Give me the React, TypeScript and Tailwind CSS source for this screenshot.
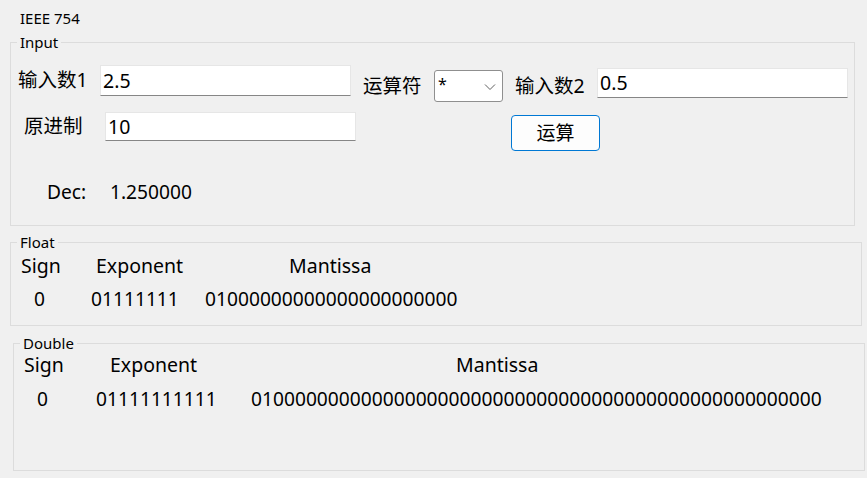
import React from 'react'

const font = { fontFamily: '"Noto Sans", "Noto Sans CJK SC", sans-serif' }

const TextBox: React.FC<{ value: string; className?: string }> = ({ value, className }) => (
  <div
    className={`bg-white border border-[#e6e6e6] border-b-[#868686] pl-[2px] flex items-center text-[19.5px] leading-[24px] text-black ${className ?? ''}`}
  >
    {value}
  </div>
)

const GroupBox: React.FC<{ title: string; className?: string; children: React.ReactNode }> = ({ title, className, children }) => (
  <fieldset className={`border border-[#dcdcdc] ${className ?? ''}`}>
    <legend className="ml-[6px] px-[3px] text-[15px] leading-[18px]">{title}</legend>
    {children}
  </fieldset>
)

export default function App() {
  return (
    <div className="w-[867px] h-[478px] bg-[#f0f0f0] overflow-hidden text-black" style={font}>
      <div className="pl-[20px] pt-[9px] text-[15px] leading-[18px] h-[33px]">IEEE 754</div>

      {/* Input */}
      <GroupBox title="Input" className="ml-[10px] w-[845px] h-[193px]">
        <div className="flex items-start h-[57px] text-[19.5px] leading-[24px]">
          <div className="ml-[7px] w-[82px] mt-[17px]">输入数1</div>
          <TextBox value="2.5" className="w-[251px] h-[31px] mt-[14px]" />
          <div className="ml-[12px] w-[71px] mt-[23px]">运算符</div>
          <div className="w-[69px] h-[32px] mt-[19px] bg-white border border-[#8f8f8f] rounded-[3px] flex items-center justify-between pl-[3px] pr-[6px]">
            <span className="text-[16px] leading-[20px] -mt-[4px]">*</span>
            <svg width="12" height="8" viewBox="0 0 12 8" className="mt-[2px]">
              <path d="M1 1.5 L6 6.5 L11 1.5" fill="none" stroke="#606060" strokeWidth="1" />
            </svg>
          </div>
          <div className="ml-[12px] w-[82px] mt-[23px]">输入数2</div>
          <TextBox value="0.5" className="w-[251px] h-[30px] mt-[17px]" />
        </div>
        <div className="flex items-start h-[44px] text-[19.5px] leading-[24px]">
          <div className="ml-[13px] w-[81px] mt-[6px]">原进制</div>
          <TextBox value="10" className="w-[251px] h-[29px] mt-[4px]" />
          <button className="ml-[155px] mt-[7px] w-[89px] h-[36px] bg-[#fdfdfd] border border-[#0078d4] rounded-[4px] text-[19px] leading-[24px]">
            运算
          </button>
        </div>
        <div className="flex mt-[28px] text-[19.2px] leading-[24px]">
          <div className="ml-[36px] w-[63px]">Dec:</div>
          <div>1.250000</div>
        </div>
      </GroupBox>

      {/* Float */}
      <GroupBox title="Float" className="ml-[10px] mt-[7px] w-[852px] h-[93px]">
        <div className="flex mt-[3px] text-[19.5px] leading-[24px]">
          <div className="ml-[10px] w-[75px]">Sign</div>
          <div className="w-[193px]">Exponent</div>
          <div>Mantissa</div>
        </div>
        <div className="flex mt-[9px] text-[19.2px] leading-[24px]">
          <div className="ml-[23px] w-[57px]">0</div>
          <div className="w-[114px]">01111111</div>
          <div>01000000000000000000000</div>
        </div>
      </GroupBox>

      {/* Double */}
      <GroupBox title="Double" className="ml-[13px] mt-[8px] w-[852px] h-[137px]">
        <div className="flex mt-[1px] text-[19.5px] leading-[24px]">
          <div className="ml-[10px] w-[86px]">Sign</div>
          <div className="w-[346px]">Exponent</div>
          <div>Mantissa</div>
        </div>
        <div className="flex mt-[10px] text-[19.2px] leading-[24px]">
          <div className="ml-[23px] w-[59px]">0</div>
          <div className="w-[155px]">01111111111</div>
          <div>0100000000000000000000000000000000000000000000000000</div>
        </div>
      </GroupBox>
    </div>
  )
}
